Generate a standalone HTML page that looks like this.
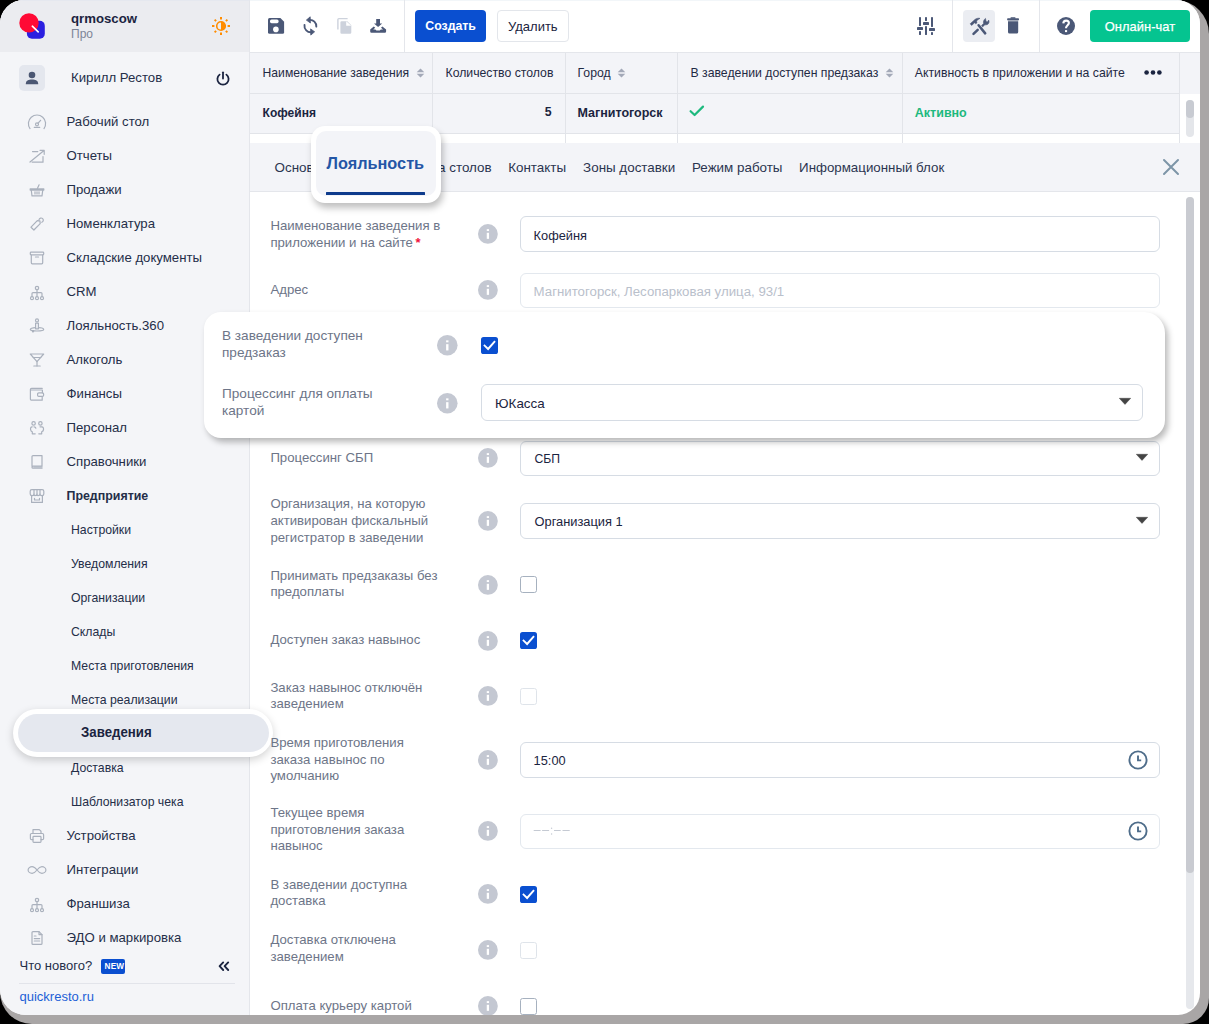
<!DOCTYPE html><html><head><meta charset="utf-8"><style>
*{margin:0;padding:0;box-sizing:border-box}
html,body{width:1209px;height:1024px;overflow:hidden;background:#000;font-family:"Liberation Sans",sans-serif}
.shadow{position:absolute;left:0;top:0;width:1209px;height:1024px;border-radius:26px 34px 26px 32px;background:#a9a6a6}
.win{position:absolute;left:0;top:0;width:1200px;height:1015px;border-radius:24px 24px 22px 26px;background:#fff;overflow:hidden}
.t{position:absolute;white-space:nowrap}
.abs{position:absolute}
svg{position:absolute;overflow:visible}
</style></head><body>
<div class="shadow"></div><div class="win">
<div class="abs" style="left:0;top:0;width:249px;height:1015px;background:#f4f5f8"></div>
<div class="abs" style="left:249px;top:0;width:1px;height:1015px;background:#e4e6eb"></div>
<div class="abs" style="left:0;top:0;width:249px;height:52px;background:#ebecf0"></div>
<svg style="left:0;top:0" width="60" height="52" viewBox="0 0 60 52"><rect x="26.9" y="20.8" width="17.9" height="17.9" rx="5" fill="#2b1fe0"/><circle cx="29" cy="22.9" r="9.7" fill="#ff0a35"/><line x1="32.3" y1="26.2" x2="38.2" y2="31.9" stroke="#fff" stroke-width="1.6" stroke-linecap="round"/></svg>
<div class="t" style="left:71px;top:11.03px;font-size:13.2px;line-height:16px;font-weight:700;color:#1b2440;">qrmoscow</div>
<div class="t" style="left:71px;top:26.94px;font-size:12px;line-height:15px;font-weight:400;color:#7d8597;">Про</div>
<svg style="left:0;top:0" width="249" height="52" viewBox="0 0 249 52"><line x1="227.60" y1="26.00" x2="230.00" y2="26.00" stroke="#ff8c00" stroke-width="2.0"/><line x1="225.88" y1="30.88" x2="227.36" y2="32.36" stroke="#ff8c00" stroke-width="1.9"/><line x1="221.00" y1="32.60" x2="221.00" y2="35.00" stroke="#ff8c00" stroke-width="2.0"/><line x1="216.12" y1="30.88" x2="214.64" y2="32.36" stroke="#ff8c00" stroke-width="1.9"/><line x1="214.40" y1="26.00" x2="212.00" y2="26.00" stroke="#ff8c00" stroke-width="2.0"/><line x1="216.12" y1="21.12" x2="214.64" y2="19.64" stroke="#ff8c00" stroke-width="1.9"/><line x1="221.00" y1="19.40" x2="221.00" y2="17.00" stroke="#ff8c00" stroke-width="2.0"/><line x1="225.88" y1="21.12" x2="227.36" y2="19.64" stroke="#ff8c00" stroke-width="1.9"/><circle cx="221" cy="26" r="4.3" fill="none" stroke="#ff8c00" stroke-width="1.6"/><path d="M221 21.7 A4.3 4.3 0 0 1 221 30.3 Z" fill="#ff8c00"/></svg>
<div class="abs" style="left:19px;top:65px;width:26px;height:26px;border-radius:5px;background:#e4e7ee"></div>
<svg style="left:19px;top:65px" width="26" height="26" viewBox="0 0 26 26"><circle cx="13" cy="10" r="3.3" fill="#4b5773"/><path d="M6.8 19.2 C6.8 15.6 9.5 14.6 13 14.6 C16.5 14.6 19.2 15.6 19.2 19.2 Z" fill="#4b5773"/></svg>
<div class="t" style="left:71px;top:70.43px;font-size:13.2px;line-height:16px;font-weight:400;color:#242e48;">Кирилл Рестов</div>
<svg style="left:212px;top:68px" width="22" height="22" viewBox="0 0 22 22"><path d="M7.6 6.6 A5.6 5.6 0 1 0 14.4 6.6" fill="none" stroke="#1b2440" stroke-width="1.8" stroke-linecap="round"/><line x1="11" y1="4.3" x2="11" y2="10.5" stroke="#1b2440" stroke-width="1.8" stroke-linecap="round"/></svg>
<div class="t" style="left:66.5px;top:114.03px;font-size:13.2px;line-height:16px;font-weight:400;color:#242e48;">Рабочий стол</div>
<div class="t" style="left:66.5px;top:148.03px;font-size:13.2px;line-height:16px;font-weight:400;color:#242e48;">Отчеты</div>
<div class="t" style="left:66.5px;top:182.03px;font-size:13.2px;line-height:16px;font-weight:400;color:#242e48;">Продажи</div>
<div class="t" style="left:66.5px;top:216.03px;font-size:13.2px;line-height:16px;font-weight:400;color:#242e48;">Номенклатура</div>
<div class="t" style="left:66.5px;top:250.03px;font-size:13.2px;line-height:16px;font-weight:400;color:#242e48;">Складские документы</div>
<div class="t" style="left:66.5px;top:284.03px;font-size:13.2px;line-height:16px;font-weight:400;color:#242e48;">CRM</div>
<div class="t" style="left:66.5px;top:318.03px;font-size:13.2px;line-height:16px;font-weight:400;color:#242e48;">Лояльность.360</div>
<div class="t" style="left:66.5px;top:352.03px;font-size:13.2px;line-height:16px;font-weight:400;color:#242e48;">Алкоголь</div>
<div class="t" style="left:66.5px;top:386.03px;font-size:13.2px;line-height:16px;font-weight:400;color:#242e48;">Финансы</div>
<div class="t" style="left:66.5px;top:420.03px;font-size:13.2px;line-height:16px;font-weight:400;color:#242e48;">Персонал</div>
<div class="t" style="left:66.5px;top:454.03px;font-size:13.2px;line-height:16px;font-weight:400;color:#242e48;">Справочники</div>
<div class="t" style="left:66.5px;top:488.30px;font-size:12.4px;line-height:16px;font-weight:700;color:#242e48;">Предприятие</div>
<div class="t" style="left:71px;top:522.86px;font-size:12.25px;line-height:15px;font-weight:400;color:#242e48;">Настройки</div>
<div class="t" style="left:71px;top:556.86px;font-size:12.25px;line-height:15px;font-weight:400;color:#242e48;">Уведомления</div>
<div class="t" style="left:71px;top:590.86px;font-size:12.25px;line-height:15px;font-weight:400;color:#242e48;">Организации</div>
<div class="t" style="left:71px;top:624.86px;font-size:12.25px;line-height:15px;font-weight:400;color:#242e48;">Склады</div>
<div class="t" style="left:71px;top:658.86px;font-size:12.25px;line-height:15px;font-weight:400;color:#242e48;">Места приготовления</div>
<div class="t" style="left:71px;top:692.86px;font-size:12.25px;line-height:15px;font-weight:400;color:#242e48;">Места реализации</div>
<div class="t" style="left:71px;top:760.86px;font-size:12.25px;line-height:15px;font-weight:400;color:#242e48;">Доставка</div>
<div class="t" style="left:71px;top:794.86px;font-size:12.25px;line-height:15px;font-weight:400;color:#242e48;">Шаблонизатор чека</div>
<div class="t" style="left:66.5px;top:828.03px;font-size:13.2px;line-height:16px;font-weight:400;color:#242e48;">Устройства</div>
<div class="t" style="left:66.5px;top:862.03px;font-size:13.2px;line-height:16px;font-weight:400;color:#242e48;">Интеграции</div>
<div class="t" style="left:66.5px;top:896.03px;font-size:13.2px;line-height:16px;font-weight:400;color:#242e48;">Франшиза</div>
<div class="t" style="left:66.5px;top:930.03px;font-size:13.2px;line-height:16px;font-weight:400;color:#242e48;">ЭДО и маркировка</div>
<svg style="left:29px;top:114px" width="16" height="16" viewBox="0 0 16 16" fill="none" stroke="#aab1bd" stroke-width="1.2" stroke-linecap="round" stroke-linejoin="round"><path d="M1.0 14.6 A8.6 8.6 0 1 1 15.0 14.6"/><circle cx="8" cy="10.3" r="1.5"/><line x1="9.1" y1="9.2" x2="11.6" y2="6.3"/><line x1="5.3" y1="13.4" x2="10.7" y2="13.4"/></svg>
<svg style="left:29px;top:148px" width="16" height="16" viewBox="0 0 16 16" fill="none" stroke="#aab1bd" stroke-width="1.2" stroke-linecap="round" stroke-linejoin="round"><path d="M1 14 L15 2.5 M11 2.3 H15.2 V6.3"/><path d="M3.5 3.6 H8.8 M14 8.5 V14.2 H3.2"/></svg>
<svg style="left:29px;top:182px" width="16" height="16" viewBox="0 0 16 16" fill="none" stroke="#aab1bd" stroke-width="1.2" stroke-linecap="round" stroke-linejoin="round"><path d="M1.2 6.8 H14.8 V8.1 H1.2 Z"/><path d="M2.3 8.3 L3 13.8 H13 L13.7 8.3"/><line x1="6" y1="9.8" x2="6" y2="12"/><line x1="8" y1="9.8" x2="8" y2="12"/><line x1="10" y1="9.8" x2="10" y2="12"/><line x1="8.4" y1="6.6" x2="10.1" y2="2.8"/></svg>
<svg style="left:29px;top:216px" width="16" height="16" viewBox="0 0 16 16" fill="none" stroke="#aab1bd" stroke-width="1.2" stroke-linecap="round" stroke-linejoin="round"><path d="M2 11.2 L8.3 4.7 L10.9 4.8 L11.2 7.6 L4.9 14 Z"/><path d="M10 3.6 A2.2 2.2 0 1 1 12.8 6.3"/></svg>
<svg style="left:29px;top:250px" width="16" height="16" viewBox="0 0 16 16" fill="none" stroke="#aab1bd" stroke-width="1.2" stroke-linecap="round" stroke-linejoin="round"><rect x="1.3" y="2.2" width="13.4" height="2.7" rx="0.8"/><path d="M2.3 5 V12.8 A1 1 0 0 0 3.3 13.8 H12.7 A1 1 0 0 0 13.7 12.8 V5"/><line x1="6.5" y1="7" x2="9.5" y2="7"/></svg>
<svg style="left:29px;top:284px" width="16" height="16" viewBox="0 0 16 16" fill="none" stroke="#aab1bd" stroke-width="1.2" stroke-linecap="round" stroke-linejoin="round"><circle cx="8" cy="4" r="1.7"/><path d="M8 5.7 V8.6 M3 12.6 V9.6 Q3 8.6 4 8.6 H12 Q13 8.6 13 9.6 V12.6 M8 8.6 V12.6"/><circle cx="3" cy="14.2" r="1.5"/><circle cx="8" cy="14.2" r="1.5"/><circle cx="13" cy="14.2" r="1.5"/></svg>
<svg style="left:29px;top:318px" width="16" height="16" viewBox="0 0 16 16" fill="none" stroke="#aab1bd" stroke-width="1.2" stroke-linecap="round" stroke-linejoin="round"><circle cx="8" cy="2.4" r="1.5"/><path d="M6.6 5.2 H9.4 V10.8 H6.6 Z"/><path d="M6.6 9.6 C3 9.6 1.3 10.6 1.3 11.6 C1.3 12.6 3.3 13 8 13 C12.7 13 14.7 12.6 14.7 11.6 C14.7 10.6 13 9.6 9.4 9.6"/><circle cx="4" cy="13.2" r="0.6"/></svg>
<svg style="left:29px;top:352px" width="16" height="16" viewBox="0 0 16 16" fill="none" stroke="#aab1bd" stroke-width="1.2" stroke-linecap="round" stroke-linejoin="round"><path d="M1.3 2 H14.7 L8 9.6 Z"/><path d="M4.2 5.5 H11.8"/><line x1="8" y1="9.6" x2="8" y2="14"/><line x1="4.8" y1="14" x2="11.2" y2="14"/></svg>
<svg style="left:29px;top:386px" width="16" height="16" viewBox="0 0 16 16" fill="none" stroke="#aab1bd" stroke-width="1.2" stroke-linecap="round" stroke-linejoin="round"><path d="M13.2 2.4 H2.6 A1.2 1.2 0 0 0 1.4 3.6 V13 A1.2 1.2 0 0 0 2.6 14.2 H13.2 V11.2"/><path d="M1.8 4 H13.4 V6.8"/><rect x="8.6" y="6.8" width="6" height="3.6" rx="1.2"/></svg>
<svg style="left:29px;top:420px" width="16" height="16" viewBox="0 0 16 16" fill="none" stroke="#aab1bd" stroke-width="1.2" stroke-linecap="round" stroke-linejoin="round"><circle cx="4.6" cy="3.4" r="1.7"/><circle cx="11.4" cy="3.4" r="1.7"/><path d="M3.2 6.8 C1.6 6.8 1.4 8.2 1.6 9.6 C1.8 11 2.6 11.6 3.3 11.8 V13.8 H6.2 M6.8 8.2 C6.8 7.2 6 6.8 5 6.8"/><path d="M9.8 13.8 H12.7 V11.8 C13.6 11.5 14.4 10.8 14.5 9.6 C14.6 8.2 14.4 6.8 12.8 6.8 H11"/></svg>
<svg style="left:29px;top:454px" width="16" height="16" viewBox="0 0 16 16" fill="none" stroke="#aab1bd" stroke-width="1.2" stroke-linecap="round" stroke-linejoin="round"><path d="M3 12.2 V2.6 A1 1 0 0 1 4 1.6 H13 V12.2 H4 A1 1 0 0 0 3 13.2 A1 1 0 0 0 4 14.2 H13"/><line x1="5" y1="13" x2="13" y2="13"/></svg>
<svg style="left:29px;top:488px" width="16" height="16" viewBox="0 0 16 16" fill="none" stroke="#aab1bd" stroke-width="1.2" stroke-linecap="round" stroke-linejoin="round"><path d="M2.8 1.6 H13.2 C14.2 1.6 14.8 2.3 14.8 3.3 V6 C14.8 7.2 13.8 7.6 12.9 7.6 C11.9 7.6 11 7 11 6 C11 7 10 7.6 9 7.6 C8 7.6 8 7 8 6 C8 7 7 7.6 6 7.6 C5 7.6 5 7 5 6 C5 7 4 7.6 3.2 7.6 C2.2 7.6 1.2 7.2 1.2 6 V3.3 C1.2 2.3 1.8 1.6 2.8 1.6 Z"/><path d="M5 1.6 V6 M8 1.6 V6 M11 1.6 V6"/><path d="M2.6 8 V14.4 H13.4 V8"/><path d="M5.5 10.3 V12 H10.5 V10.3"/></svg>
<svg style="left:29px;top:828px" width="16" height="16" viewBox="0 0 16 16" fill="none" stroke="#aab1bd" stroke-width="1.2" stroke-linecap="round" stroke-linejoin="round"><path d="M4 5.5 V1.6 H10.3 L12 3.2 V5.5"/><path d="M4 11.6 H2.6 A1.2 1.2 0 0 1 1.4 10.4 V6.7 A1.2 1.2 0 0 1 2.6 5.5 H13.4 A1.2 1.2 0 0 1 14.6 6.7 V10.4 A1.2 1.2 0 0 1 13.4 11.6 H12"/><rect x="4" y="8.4" width="8" height="6" rx="0.8"/></svg>
<svg style="left:29px;top:862px" width="16" height="16" viewBox="0 0 16 16" fill="none" stroke="#aab1bd" stroke-width="1.2" stroke-linecap="round" stroke-linejoin="round"><path d="M8 8 C6 5.4 4.6 4.6 3.1 4.6 C1 4.6 -0.9 6.1 -0.9 8 C-0.9 9.9 1 11.4 3.1 11.4 C4.6 11.4 6 10.6 8 8 C10 5.4 11.4 4.6 12.9 4.6 C15 4.6 16.9 6.1 16.9 8 C16.9 9.9 15 11.4 12.9 11.4 C11.4 11.4 10 10.6 8 8 Z"/></svg>
<svg style="left:29px;top:896px" width="16" height="16" viewBox="0 0 16 16" fill="none" stroke="#aab1bd" stroke-width="1.2" stroke-linecap="round" stroke-linejoin="round"><circle cx="8" cy="4" r="1.7"/><path d="M8 5.7 V8.6 M3 12.6 V9.6 Q3 8.6 4 8.6 H12 Q13 8.6 13 9.6 V12.6 M8 8.6 V12.6"/><circle cx="3" cy="14.2" r="1.5"/><circle cx="8" cy="14.2" r="1.5"/><circle cx="13" cy="14.2" r="1.5"/></svg>
<svg style="left:29px;top:930px" width="16" height="16" viewBox="0 0 16 16" fill="none" stroke="#aab1bd" stroke-width="1.2" stroke-linecap="round" stroke-linejoin="round"><path d="M3 2.6 A1 1 0 0 1 4 1.6 H10 L13 4.6 V13.4 A1 1 0 0 1 12 14.4 H4 A1 1 0 0 1 3 13.4 Z"/><path d="M10 1.6 V4.6 H13"/><line x1="5.3" y1="6" x2="7" y2="6"/><line x1="5.3" y1="8.6" x2="10.7" y2="8.6"/><line x1="5.3" y1="11" x2="10.7" y2="11"/></svg>
<div class="abs" style="left:13px;top:709px;width:260px;height:48px;border-radius:24px;background:#fff;box-shadow:0 3px 8px rgba(0,0,0,0.18)"></div>
<div class="abs" style="left:18px;top:714px;width:250.5px;height:37.5px;border-radius:19px;background:#e5e8ef"></div>
<div class="t" style="left:80.7px;top:722.10px;font-size:15px;line-height:19px;font-weight:700;color:#1b2440;transform:scaleX(0.884);transform-origin:0 0">Заведения</div>
<div class="t" style="left:19.5px;top:957.80px;font-size:13px;line-height:16px;font-weight:400;color:#242e48;">Что нового?</div>
<div class="abs" style="left:101px;top:959px;width:24px;height:14.5px;border-radius:2px;background:#0a4fd0"></div>
<div class="t" style="left:104.6px;top:962.06px;font-size:8.2px;line-height:10px;font-weight:700;color:#fff;letter-spacing:0.2px">NEW</div>
<svg style="left:214px;top:958px" width="20" height="16" viewBox="0 0 20 16" fill="none" stroke="#1b2440" stroke-width="1.9" stroke-linecap="round" stroke-linejoin="round"><path d="M9.2 4.4 L5.6 8.2 L9.2 12 M14.2 4.4 L10.6 8.2 L14.2 12"/></svg>
<div class="abs" style="left:19px;top:982.5px;width:216px;height:1px;background:#e2e4ea"></div>
<div class="t" style="left:19.5px;top:988.50px;font-size:13px;line-height:16px;font-weight:400;color:#1c5fd6;">quickresto.ru</div>
<div class="abs" style="left:250px;top:0;width:950px;height:52px;background:#fff"></div>
<div class="abs" style="left:250px;top:52px;width:950px;height:1px;background:#e4e6eb"></div>
<div class="abs" style="left:250px;top:0;width:950px;height:1px;background:#f2f6f9"></div>
<div class="abs" style="left:0;top:0;width:249px;height:1px;background:#e5e8ef"></div>
<svg style="left:0;top:0" width="1200" height="52" viewBox="0 0 1200 52"><path d="M268 19.5 A1.5 1.5 0 0 1 269.5 18 H280.4 L284.1 21.7 V32.3 A1.5 1.5 0 0 1 282.6 33.8 H269.5 A1.5 1.5 0 0 1 268 32.3 Z" fill="#4b5877"/><rect x="270" y="19.4" width="8.6" height="3.8" rx="1.6" fill="#fff"/><circle cx="275.9" cy="29.4" r="2.8" fill="#fff"/><path d="M309.4 19.9 A6.3 6.3 0 0 1 316.3 26.6" fill="none" stroke="#4b5877" stroke-width="1.9" stroke-linecap="round"/><path d="M311.6 32.2 A6.3 6.3 0 0 1 304.5 25" fill="none" stroke="#4b5877" stroke-width="1.9" stroke-linecap="round"/><path d="M310.2 16.8 L306.4 20.1 L310.4 23 Z" fill="#4b5877" stroke="#4b5877" stroke-width="0.8" stroke-linejoin="round"/><path d="M310.8 35.1 L314.6 31.8 L310.6 28.9 Z" fill="#4b5877" stroke="#4b5877" stroke-width="0.8" stroke-linejoin="round"/><path d="M337.9 29.4 V19.6 A1 1 0 0 1 338.9 18.6 H347.6" fill="none" stroke="#cdd2dc" stroke-width="1.4"/><path d="M340.4 22.4 A1.2 1.2 0 0 1 341.6 21.2 H347.3 L351.3 25.2 V32.6 A1.2 1.2 0 0 1 350.1 33.8 H341.6 A1.2 1.2 0 0 1 340.4 32.6 Z" fill="#cdd2dc"/><path d="M346.2 21.2 V25.8 H351.3 Z" fill="#fff"/><path d="M376.2 19 H380 V23.5 H382.2 L378.1 27.1 L374 23.5 H376.2 Z" fill="#4b5877"/><path d="M373.8 26.4 L370.2 29.6 V31.6 A1.2 1.2 0 0 0 371.4 32.8 H384.9 A1.2 1.2 0 0 0 386.1 31.6 V29.6 L382.4 26.4 L381 27.7 L383 29.4 H380.8 L379.8 30.6 H376.4 L375.4 29.4 H373.2 L375.2 27.7 Z" fill="#4b5877"/><rect x="919" y="17" width="2" height="9" rx="0.4" fill="#4b5877"/><rect x="917" y="27" width="6" height="3" rx="0.4" fill="#4b5877"/><rect x="919" y="31" width="2" height="4" rx="0.4" fill="#4b5877"/><rect x="925" y="17" width="2" height="4" rx="0.4" fill="#4b5877"/><rect x="923" y="22" width="6" height="3" rx="0.4" fill="#4b5877"/><rect x="925" y="26" width="2" height="9" rx="0.4" fill="#4b5877"/><rect x="931" y="17" width="2" height="10" rx="0.4" fill="#4b5877"/><rect x="929" y="28" width="6" height="3" rx="0.4" fill="#4b5877"/><rect x="931" y="32" width="2" height="3" rx="0.4" fill="#4b5877"/><rect x="963" y="10" width="32" height="32" rx="4" fill="#ebedf2"/><path d="M970.2 23.8 L975.2 19.3 C976.8 18.2 978.5 18 980 18.4 C978.2 19.2 976.6 20.3 976.6 21.6 L977 22.7 L975.8 23.8 L974.6 22.8 L971.6 25.4 Z" fill="#4b5877" stroke="#4b5877" stroke-width="0.6" stroke-linejoin="round"/><line x1="978.6" y1="25.2" x2="985.2" y2="33.4" stroke="#4b5877" stroke-width="2.5" stroke-linecap="round"/><path d="M981.6 25.6 L983.6 23.4 C983.2 21.8 983.5 19.8 985.5 18.4 L985.8 20.2 L986.3 21.7 L987.8 21.8 L988.6 20 C989.5 21.6 989 23.7 987.4 24.5 C986.2 25.1 985.4 24.7 984.7 24.9 L982.6 26.9 Z" fill="#4b5877" stroke="#4b5877" stroke-width="0.6" stroke-linejoin="round"/><line x1="977.7" y1="29.8" x2="973.5" y2="33.9" stroke="#4b5877" stroke-width="2.5" stroke-linecap="round"/><rect x="1007.1" y="18.2" width="11.9" height="2.2" rx="0.8" fill="#4b5877"/><rect x="1010.5" y="17.2" width="5" height="1.6" rx="0.6" fill="#4b5877"/><path d="M1008 21.2 H1018.2 V32 A1.6 1.6 0 0 1 1016.6 33.6 H1009.6 A1.6 1.6 0 0 1 1008 32 Z" fill="#4b5877"/><circle cx="1066" cy="26" r="9" fill="#4b5877"/><path d="M1063.3 23.4 C1063.4 21.5 1064.6 20.6 1066.1 20.6 C1067.8 20.6 1068.9 21.7 1068.9 23.1 C1068.9 24.9 1066.1 25.5 1066.1 27.6 V28.3" fill="none" stroke="#fff" stroke-width="2.1"/><rect x="1065" y="30.1" width="2.1" height="2" fill="#fff"/></svg>
<div class="abs" style="left:404px;top:0;width:1px;height:52px;background:#e4e6eb"></div>
<div class="abs" style="left:952px;top:0;width:1px;height:52px;background:#e4e6eb"></div>
<div class="abs" style="left:1039px;top:0;width:1px;height:52px;background:#e4e6eb"></div>
<div class="abs" style="left:415px;top:10px;width:71px;height:32px;border-radius:4px;background:#0a4fd0"></div>
<div class="t" style="left:425.3px;top:19.24px;font-size:12.3px;line-height:15px;font-weight:700;color:#fff;">Создать</div>
<div class="abs" style="left:496.5px;top:10px;width:72px;height:32px;border-radius:4px;background:#fff;border:1px solid #e3e6eb"></div>
<div class="t" style="left:508px;top:18.70px;font-size:13px;line-height:16px;font-weight:400;color:#1b2440;">Удалить</div>
<div class="abs" style="left:1090px;top:10px;width:100px;height:32px;border-radius:4px;background:#05c490"></div>
<div class="t" style="left:1104.8px;top:19.13px;font-size:12.9px;line-height:16px;font-weight:400;color:#fff;letter-spacing:0.05px;-webkit-text-stroke:0.25px #fff">Онлайн-чат</div>
<div class="abs" style="left:250px;top:53px;width:950px;height:80px;background:#f3f4f8"></div>
<div class="abs" style="left:250px;top:143px;width:950px;height:48px;background:#f3f4f8"></div>
<div class="abs" style="left:250px;top:191px;width:950px;height:1px;background:#e4e6eb"></div>
<div class="abs" style="left:250px;top:134px;width:929px;height:9px;background:#fff"></div>
<div class="abs" style="left:1180px;top:94px;width:20px;height:49px;background:#fff"></div>
<div class="abs" style="left:432px;top:53px;width:1px;height:90px;background:#e2e4e9"></div>
<div class="abs" style="left:565px;top:53px;width:1px;height:90px;background:#e2e4e9"></div>
<div class="abs" style="left:677px;top:53px;width:1px;height:90px;background:#e2e4e9"></div>
<div class="abs" style="left:902px;top:53px;width:1px;height:90px;background:#e2e4e9"></div>
<div class="abs" style="left:1179px;top:53px;width:1px;height:90px;background:#e2e4e9"></div>
<div class="abs" style="left:250px;top:93px;width:929px;height:1px;background:#e2e4e9"></div>
<div class="abs" style="left:250px;top:133px;width:929px;height:1px;background:#e2e4e9"></div>
<div class="t" style="left:262.6px;top:66.09px;font-size:12.15px;line-height:15px;font-weight:400;color:#1f2a44;">Наименование заведения</div>
<div class="t" style="left:445.5px;top:66.06px;font-size:12.25px;line-height:15px;font-weight:400;color:#1f2a44;">Количество столов</div>
<div class="t" style="left:577.5px;top:66.06px;font-size:12.25px;line-height:15px;font-weight:400;color:#1f2a44;">Город</div>
<div class="t" style="left:690.5px;top:66.06px;font-size:12.25px;line-height:15px;font-weight:400;color:#1f2a44;">В заведении доступен предзаказ</div>
<div class="t" style="left:914.8px;top:66.06px;font-size:12.25px;line-height:15px;font-weight:400;color:#1f2a44;">Активность в приложении и на сайте</div>
<svg style="left:415.8px;top:68.4px" width="9" height="10" viewBox="0 0 9 10"><path d="M4.5 0.4 L8.3 4.2 H0.7 Z M4.5 9.6 L8.3 5.8 H0.7 Z" fill="#a3a9b8"/></svg>
<svg style="left:616.8px;top:68.4px" width="9" height="10" viewBox="0 0 9 10"><path d="M4.5 0.4 L8.3 4.2 H0.7 Z M4.5 9.6 L8.3 5.8 H0.7 Z" fill="#a3a9b8"/></svg>
<svg style="left:885px;top:68.4px" width="9" height="10" viewBox="0 0 9 10"><path d="M4.5 0.4 L8.3 4.2 H0.7 Z M4.5 9.6 L8.3 5.8 H0.7 Z" fill="#a3a9b8"/></svg>
<svg style="left:1144px;top:69px" width="18" height="7" viewBox="0 0 18 7"><circle cx="2.6" cy="3.5" r="2.3" fill="#1b2440"/><circle cx="9" cy="3.5" r="2.3" fill="#1b2440"/><circle cx="15.4" cy="3.5" r="2.3" fill="#1b2440"/></svg>
<div class="t" style="left:262.6px;top:106.04px;font-size:12.0px;line-height:15px;font-weight:700;color:#1b2440;">Кофейня</div>
<div class="t" style="right:648.4px;top:105.34px;font-size:12.3px;line-height:15px;font-weight:700;color:#1b2440;">5</div>
<div class="t" style="left:577.5px;top:104.77px;font-size:12.5px;line-height:16px;font-weight:700;color:#1b2440;">Магнитогорск</div>
<svg style="left:689px;top:104px" width="16" height="14" viewBox="0 0 16 14"><path d="M1.6 7.2 L5.6 11 L14 2.6" fill="none" stroke="#1db97e" stroke-width="2.2" stroke-linecap="round" stroke-linejoin="round"/></svg>
<div class="t" style="left:914.8px;top:104.77px;font-size:12.5px;line-height:16px;font-weight:700;color:#1db97e;">Активно</div>
<div class="abs" style="left:1186px;top:99.5px;width:8.3px;height:37px;border-radius:4px;background:#e4e6ea"></div>
<div class="abs" style="left:1186px;top:99.5px;width:8.3px;height:18px;border-radius:4px;background:#c8cbd2"></div>
<div class="t" style="left:274.6px;top:159.26px;font-size:13.4px;line-height:17px;font-weight:400;color:#2b3550;">Основное</div>
<div class="t" style="left:405.2px;top:159.26px;font-size:13.4px;line-height:17px;font-weight:400;color:#2b3550;">Схема столов</div>
<div class="t" style="left:508.2px;top:159.26px;font-size:13.4px;line-height:17px;font-weight:400;color:#2b3550;">Контакты</div>
<div class="t" style="left:583.1px;top:159.26px;font-size:13.4px;line-height:17px;font-weight:400;color:#2b3550;">Зоны доставки</div>
<div class="t" style="left:692px;top:159.26px;font-size:13.4px;line-height:17px;font-weight:400;color:#2b3550;">Режим работы</div>
<div class="t" style="left:799.1px;top:159.29px;font-size:13.3px;line-height:17px;font-weight:400;color:#2b3550;">Информационный блок</div>
<svg style="left:1160px;top:156px" width="22" height="22" viewBox="0 0 22 22"><path d="M4 4 L18 18 M18 4 L4 18" stroke="#7d95a8" stroke-width="2" stroke-linecap="round"/></svg>
<div class="t" style="left:270.4px;top:217.83px;font-size:13.2px;line-height:16px;font-weight:400;color:#6d7588;">Наименование заведения в</div>
<div class="t" style="left:270.4px;top:234.63px;font-size:13.2px;line-height:16px;font-weight:400;color:#6d7588;">приложении и на сайте</div>
<div class="t" style="left:415.6px;top:234.70px;font-size:13px;line-height:16px;font-weight:700;color:#f0143c;">*</div>
<svg style="left:478.1px;top:224.4px" width="19.8" height="19.8" viewBox="0 0 20 20"><circle cx="10" cy="10" r="10" fill="#c4c8d2"/><rect x="8.85" y="5.2" width="2.3" height="1.9" fill="#fff"/><rect x="8.85" y="8.9" width="2.3" height="6.1" fill="#fff"/></svg>
<div class="abs" style="left:520px;top:216px;width:640px;height:36px;border:1px solid #d6dce4;border-radius:6px;background:#fff"></div>
<div class="t" style="left:533.6px;top:227.56px;font-size:12.8px;line-height:16px;font-weight:400;color:#1b2440;">Кофейня</div>
<div class="t" style="left:270.4px;top:281.83px;font-size:13.2px;line-height:16px;font-weight:400;color:#6d7588;">Адрес</div>
<svg style="left:478.1px;top:280.1px" width="19.8" height="19.8" viewBox="0 0 20 20"><circle cx="10" cy="10" r="10" fill="#c4c8d2"/><rect x="8.85" y="5.2" width="2.3" height="1.9" fill="#fff"/><rect x="8.85" y="8.9" width="2.3" height="6.1" fill="#fff"/></svg>
<div class="abs" style="left:520px;top:272.5px;width:640px;height:35.5px;border:1px solid #e3e8ee;border-radius:6px;background:#fff"></div>
<div class="t" style="left:533.6px;top:282.51px;font-size:13.25px;line-height:17px;font-weight:400;color:#b9c0cb;">Магнитогорск, Лесопарковая улица, 93/1</div>
<div class="t" style="left:270.4px;top:449.83px;font-size:13.2px;line-height:16px;font-weight:400;color:#6d7588;">Процессинг СБП</div>
<svg style="left:478.1px;top:448.0px" width="19.8" height="19.8" viewBox="0 0 20 20"><circle cx="10" cy="10" r="10" fill="#c4c8d2"/><rect x="8.85" y="5.2" width="2.3" height="1.9" fill="#fff"/><rect x="8.85" y="8.9" width="2.3" height="6.1" fill="#fff"/></svg>
<div class="abs" style="left:520px;top:441px;width:640px;height:34.69999999999999px;border:1px solid #d6dce4;border-radius:6px;background:#fff"></div>
<div class="t" style="left:534.5px;top:451.87px;font-size:12.2px;line-height:15px;font-weight:400;color:#1b2440;">СБП</div>
<svg style="left:1135.8px;top:453.8px" width="12" height="7" viewBox="0 0 12 7"><path d="M0.3 0.3 H11.7 L6 6.4 Z" fill="#444" stroke="#444" stroke-width="0.5" stroke-linejoin="round"/></svg>
<div class="t" style="left:270.4px;top:496.23px;font-size:13.2px;line-height:16px;font-weight:400;color:#6d7588;">Организация, на которую</div>
<div class="t" style="left:270.4px;top:513.03px;font-size:13.2px;line-height:16px;font-weight:400;color:#6d7588;">активирован фискальный</div>
<div class="t" style="left:270.4px;top:529.83px;font-size:13.2px;line-height:16px;font-weight:400;color:#6d7588;">регистратор в заведении</div>
<svg style="left:478.1px;top:511.30000000000007px" width="19.8" height="19.8" viewBox="0 0 20 20"><circle cx="10" cy="10" r="10" fill="#c4c8d2"/><rect x="8.85" y="5.2" width="2.3" height="1.9" fill="#fff"/><rect x="8.85" y="8.9" width="2.3" height="6.1" fill="#fff"/></svg>
<div class="abs" style="left:520px;top:503.3px;width:640px;height:35.49999999999994px;border:1px solid #d6dce4;border-radius:6px;background:#fff"></div>
<div class="t" style="left:534.5px;top:513.65px;font-size:12.85px;line-height:16px;font-weight:400;color:#1b2440;">Организация 1</div>
<svg style="left:1135.8px;top:516.8px" width="12" height="7" viewBox="0 0 12 7"><path d="M0.3 0.3 H11.7 L6 6.4 Z" fill="#444" stroke="#444" stroke-width="0.5" stroke-linejoin="round"/></svg>
<div class="t" style="left:270.4px;top:567.63px;font-size:13.2px;line-height:16px;font-weight:400;color:#6d7588;">Принимать предзаказы без</div>
<div class="t" style="left:270.4px;top:584.43px;font-size:13.2px;line-height:16px;font-weight:400;color:#6d7588;">предоплаты</div>
<svg style="left:478.1px;top:574.5px" width="19.8" height="19.8" viewBox="0 0 20 20"><circle cx="10" cy="10" r="10" fill="#c4c8d2"/><rect x="8.85" y="5.2" width="2.3" height="1.9" fill="#fff"/><rect x="8.85" y="8.9" width="2.3" height="6.1" fill="#fff"/></svg>
<div class="abs" style="left:520.2px;top:576.3px;width:17px;height:17px;border:1px solid #a6b1bf;border-radius:2.6px;background:#fff"></div>
<div class="t" style="left:270.4px;top:632.03px;font-size:13.2px;line-height:16px;font-weight:400;color:#6d7588;">Доступен заказ навынос</div>
<svg style="left:478.1px;top:631.0px" width="19.8" height="19.8" viewBox="0 0 20 20"><circle cx="10" cy="10" r="10" fill="#c4c8d2"/><rect x="8.85" y="5.2" width="2.3" height="1.9" fill="#fff"/><rect x="8.85" y="8.9" width="2.3" height="6.1" fill="#fff"/></svg>
<svg style="left:520.1px;top:631.9px" width="17" height="17" viewBox="0 0 17 17"><rect width="17" height="17" rx="2.6" fill="#0a4fd0"/><path d="M3.6 8.6 L7.1 12 L13.4 4.8" fill="none" stroke="#fff" stroke-width="1.9" stroke-linecap="square"/></svg>
<div class="t" style="left:270.4px;top:679.63px;font-size:13.2px;line-height:16px;font-weight:400;color:#6d7588;">Заказ навынос отключён</div>
<div class="t" style="left:270.4px;top:696.43px;font-size:13.2px;line-height:16px;font-weight:400;color:#6d7588;">заведением</div>
<svg style="left:478.1px;top:686.2px" width="19.8" height="19.8" viewBox="0 0 20 20"><circle cx="10" cy="10" r="10" fill="#c4c8d2"/><rect x="8.85" y="5.2" width="2.3" height="1.9" fill="#fff"/><rect x="8.85" y="8.9" width="2.3" height="6.1" fill="#fff"/></svg>
<div class="abs" style="left:520.2px;top:688px;width:17px;height:17px;border:1px solid #dfe4ea;border-radius:2.6px;background:#fff"></div>
<div class="t" style="left:270.4px;top:734.83px;font-size:13.2px;line-height:16px;font-weight:400;color:#6d7588;">Время приготовления</div>
<div class="t" style="left:270.4px;top:751.63px;font-size:13.2px;line-height:16px;font-weight:400;color:#6d7588;">заказа навынос по</div>
<div class="t" style="left:270.4px;top:768.43px;font-size:13.2px;line-height:16px;font-weight:400;color:#6d7588;">умолчанию</div>
<svg style="left:478.1px;top:749.9px" width="19.8" height="19.8" viewBox="0 0 20 20"><circle cx="10" cy="10" r="10" fill="#c4c8d2"/><rect x="8.85" y="5.2" width="2.3" height="1.9" fill="#fff"/><rect x="8.85" y="8.9" width="2.3" height="6.1" fill="#fff"/></svg>
<div class="abs" style="left:520px;top:742.3px;width:640px;height:35.5px;border:1px solid #d6dce4;border-radius:6px;background:#fff"></div>
<div class="t" style="left:533.6px;top:752.66px;font-size:12.8px;line-height:16px;font-weight:400;color:#1b2440;">15:00</div>
<svg style="left:1128px;top:749.6px" width="20" height="20" viewBox="0 0 20 20"><circle cx="10" cy="10" r="8.6" fill="none" stroke="#4f6d8a" stroke-width="1.9"/><path d="M10 5.6 V10.4 H13.2" fill="none" stroke="#4f6d8a" stroke-width="1.9"/></svg>
<div class="t" style="left:270.4px;top:804.83px;font-size:13.2px;line-height:16px;font-weight:400;color:#6d7588;">Текущее время</div>
<div class="t" style="left:270.4px;top:821.63px;font-size:13.2px;line-height:16px;font-weight:400;color:#6d7588;">приготовления заказа</div>
<div class="t" style="left:270.4px;top:838.43px;font-size:13.2px;line-height:16px;font-weight:400;color:#6d7588;">навынос</div>
<svg style="left:478.1px;top:820.6px" width="19.8" height="19.8" viewBox="0 0 20 20"><circle cx="10" cy="10" r="10" fill="#c4c8d2"/><rect x="8.85" y="5.2" width="2.3" height="1.9" fill="#fff"/><rect x="8.85" y="8.9" width="2.3" height="6.1" fill="#fff"/></svg>
<div class="abs" style="left:520px;top:813.6px;width:640px;height:35.0px;border:1px solid #e3e8ee;border-radius:6px;background:#fff"></div>
<svg style="left:0;top:0" width="1200" height="1015"><g stroke="#c5cad3" stroke-width="1"><line x1="533.7" y1="830.5" x2="540.6" y2="830.5"/><line x1="542.1" y1="830.5" x2="549.1" y2="830.5"/><line x1="554" y1="830.5" x2="560.7" y2="830.5"/><line x1="562.5" y1="830.5" x2="569.7" y2="830.5"/></g><circle cx="551.6" cy="828.3" r="0.7" fill="#c5cad3"/><circle cx="551.6" cy="834" r="0.7" fill="#c5cad3"/></svg>
<svg style="left:1128px;top:820.8px" width="20" height="20" viewBox="0 0 20 20"><circle cx="10" cy="10" r="8.6" fill="none" stroke="#4f6d8a" stroke-width="1.9"/><path d="M10 5.6 V10.4 H13.2" fill="none" stroke="#4f6d8a" stroke-width="1.9"/></svg>
<div class="t" style="left:270.4px;top:876.63px;font-size:13.2px;line-height:16px;font-weight:400;color:#6d7588;">В заведении доступна</div>
<div class="t" style="left:270.4px;top:893.43px;font-size:13.2px;line-height:16px;font-weight:400;color:#6d7588;">доставка</div>
<svg style="left:478.1px;top:883.9px" width="19.8" height="19.8" viewBox="0 0 20 20"><circle cx="10" cy="10" r="10" fill="#c4c8d2"/><rect x="8.85" y="5.2" width="2.3" height="1.9" fill="#fff"/><rect x="8.85" y="8.9" width="2.3" height="6.1" fill="#fff"/></svg>
<svg style="left:520.1px;top:885.9px" width="17" height="17" viewBox="0 0 17 17"><rect width="17" height="17" rx="2.6" fill="#0a4fd0"/><path d="M3.6 8.6 L7.1 12 L13.4 4.8" fill="none" stroke="#fff" stroke-width="1.9" stroke-linecap="square"/></svg>
<div class="t" style="left:270.4px;top:932.43px;font-size:13.2px;line-height:16px;font-weight:400;color:#6d7588;">Доставка отключена</div>
<div class="t" style="left:270.4px;top:949.23px;font-size:13.2px;line-height:16px;font-weight:400;color:#6d7588;">заведением</div>
<svg style="left:478.1px;top:940.1px" width="19.8" height="19.8" viewBox="0 0 20 20"><circle cx="10" cy="10" r="10" fill="#c4c8d2"/><rect x="8.85" y="5.2" width="2.3" height="1.9" fill="#fff"/><rect x="8.85" y="8.9" width="2.3" height="6.1" fill="#fff"/></svg>
<div class="abs" style="left:520.2px;top:942px;width:17px;height:17px;border:1px solid #dfe4ea;border-radius:2.6px;background:#fff"></div>
<div class="t" style="left:270.4px;top:998.33px;font-size:13.2px;line-height:16px;font-weight:400;color:#6d7588;">Оплата курьеру картой</div>
<svg style="left:478.1px;top:995.9px" width="19.8" height="19.8" viewBox="0 0 20 20"><circle cx="10" cy="10" r="10" fill="#c4c8d2"/><rect x="8.85" y="5.2" width="2.3" height="1.9" fill="#fff"/><rect x="8.85" y="8.9" width="2.3" height="6.1" fill="#fff"/></svg>
<div class="abs" style="left:520.2px;top:998px;width:17px;height:17px;border:1px solid #a6b1bf;border-radius:2.6px;background:#fff"></div>
<div class="abs" style="left:1186px;top:197px;width:8px;height:811.5px;border-radius:4px;background:#e6e8ec"></div>
<div class="abs" style="left:1186px;top:197px;width:8px;height:676px;border-radius:4px;background:#c9cbd1"></div>
<div class="abs" style="left:204px;top:312px;width:961px;height:125.7px;border-radius:17px 21px 18px 17px;background:#fff;box-shadow:3px 4px 6px rgba(0,0,0,0.28)"></div>
<div class="t" style="left:222px;top:326.79px;font-size:13.6px;line-height:17px;font-weight:400;color:#6d7588;">В заведении доступен</div>
<div class="t" style="left:222px;top:343.99px;font-size:13.6px;line-height:17px;font-weight:400;color:#6d7588;">предзаказ</div>
<svg style="left:436.9px;top:334.7px" width="20.6" height="20.6" viewBox="0 0 20 20"><circle cx="10" cy="10" r="10" fill="#c4c8d2"/><rect x="8.85" y="5.2" width="2.3" height="1.9" fill="#fff"/><rect x="8.85" y="8.9" width="2.3" height="6.1" fill="#fff"/></svg>
<svg style="left:480.6px;top:336.8px" width="17" height="17" viewBox="0 0 17 17"><rect width="17" height="17" rx="2.6" fill="#0a4fd0"/><path d="M3.6 8.6 L7.1 12 L13.4 4.8" fill="none" stroke="#fff" stroke-width="1.9" stroke-linecap="square"/></svg>
<div class="t" style="left:222px;top:384.89px;font-size:13.6px;line-height:17px;font-weight:400;color:#6d7588;">Процессинг для оплаты</div>
<div class="t" style="left:222px;top:402.09px;font-size:13.6px;line-height:17px;font-weight:400;color:#6d7588;">картой</div>
<svg style="left:436.9px;top:393.2px" width="20.6" height="20.6" viewBox="0 0 20 20"><circle cx="10" cy="10" r="10" fill="#c4c8d2"/><rect x="8.85" y="5.2" width="2.3" height="1.9" fill="#fff"/><rect x="8.85" y="8.9" width="2.3" height="6.1" fill="#fff"/></svg>
<div class="abs" style="left:480.6px;top:384.4px;width:662.4px;height:37.10000000000002px;border:1px solid #d6dce4;border-radius:6px;background:#fff"></div>
<div class="t" style="left:495.1px;top:395.46px;font-size:13.4px;line-height:17px;font-weight:400;color:#1b2440;">ЮКасса</div>
<svg style="left:1118.5px;top:398.3px" width="12" height="7" viewBox="0 0 12 7"><path d="M0.3 0.3 H11.7 L6 6.4 Z" fill="#444" stroke="#444" stroke-width="0.5" stroke-linejoin="round"/></svg>
<div class="abs" style="left:311px;top:126px;width:129.5px;height:77px;border-radius:14px;background:#fff;box-shadow:2px 5px 7px rgba(0,0,0,0.25)"></div>
<div class="abs" style="left:316px;top:131px;width:120px;height:64.5px;border-radius:10px;background:#f3f4f8"></div>
<div class="t" style="left:326.5px;top:153.25px;font-size:16.3px;line-height:20px;font-weight:700;color:#2456a6;">Лояльность</div>
<div class="abs" style="left:326.4px;top:192.3px;width:99px;height:3.2px;border-radius:0.6px;background:#0e3b8c"></div>
</div></body></html>
